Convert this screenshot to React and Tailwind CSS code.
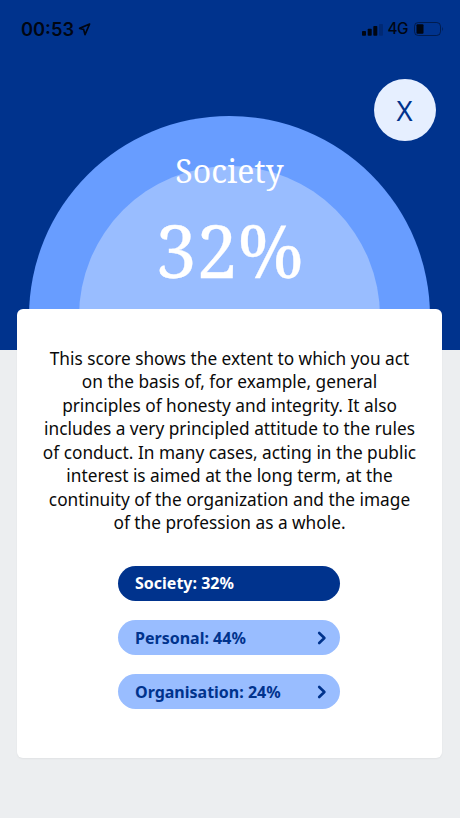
const description = [
  'This score shows the extent to which you act',
  'on the basis of, for example, general',
  'principles of honesty and integrity. It also',
  'includes a very principled attitude to the rules',
  'of conduct. In many cases, acting in the public',
  'interest is aimed at the long term, at the',
  'continuity of the organization and the image',
  'of the profession as a whole.',
];

const scores = [
  { label: 'Society', value: 32, active: true },
  { label: 'Personal', value: 44 },
  { label: 'Organisation', value: 24 },
];

function StatusBar() {
  return (
    <div className="flex h-[58px] items-center pl-[21px] pr-[16px] font-['Inter','Liberation_Sans',sans-serif] text-[#000612]">
      <span className="text-[18.3px] leading-none font-semibold">00:53</span>
      <svg className="ml-[4px] h-[13px] w-[13px]" viewBox="0 0 13 13" fill="none" stroke="currentColor" strokeWidth="1.7" strokeLinejoin="round">
        <path d="M11.6 1 L1.6 5.4 L5.6 6.4 L7 11.6 Z" />
      </svg>
      <svg className="mt-[2px] ml-auto h-3 w-[21px]" viewBox="0 0 21 12" fill="currentColor">
        <rect x="0" y="7" width="4" height="4.8" rx="0.8" />
        <rect x="5.7" y="4.8" width="4" height="7" rx="0.8" />
        <rect x="11.3" y="2" width="4" height="9.8" rx="0.8" />
        <rect x="17" y="0" width="4" height="11.8" rx="0.8" opacity="0.2" />
      </svg>
      <span className="ml-[5px] text-[15.3px] leading-none tracking-[-0.5px] font-medium">4G</span>
      <svg className="ml-[6px] h-[14px] w-[30px]" viewBox="0 0 30 14" fill="none">
        <rect x="0.5" y="0.5" width="26" height="13" rx="3.8" stroke="currentColor" opacity="0.5" />
        <rect x="2.5" y="2.3" width="7" height="9.4" rx="1" fill="currentColor" />
        <path d="M28.2 4.7 Q30 7 28.2 9.3 Z" fill="currentColor" opacity="0.5" />
      </svg>
    </div>
  );
}

function ScoreArc() {
  return (
    <div className="ml-[29px] mt-[58px] h-[200px] w-[401px] overflow-hidden">
      <div className="grid h-[401px] w-[401px] rounded-full bg-[#689dff]">
        <div className="col-start-1 row-start-1 mx-auto mt-[50px] h-[301px] w-[301px] rounded-full bg-[#99bdff]" />
        <div className="col-start-1 row-start-1 pt-[32px] text-center font-['Noto_Serif','DejaVu_Serif_Condensed','DejaVu_Serif',serif] text-white">
          <h1 className="text-[32px] leading-[46px]">Society</h1>
          <p className="mt-[6px] text-[73.4px] leading-[100px] [-webkit-text-stroke:0.3px_white]">32%</p>
        </div>
      </div>
    </div>
  );
}

function ScoreButton({ label, value, active }) {
  return (
    <button
      className={`flex h-[34.5px] w-[222px] items-center justify-between rounded-full pl-[17px] pr-[13px] text-[16px] font-bold ${
        active ? 'bg-[#00338d] text-white' : 'bg-[#99bdff] pt-px text-[#00338d]'
      }`}
    >
      <span>{label}: {value}%</span>
      {!active && (
        <svg className="h-[14px] w-[10px]" viewBox="0 0 10 14" fill="none" stroke="currentColor" strokeWidth="2.6" strokeLinecap="round" strokeLinejoin="round">
          <path d="M2.2 2 L7.4 7 L2.2 12" />
        </svg>
      )}
    </button>
  );
}

export default function App() {
  return (
    <div className="relative h-[818px] w-[460px] overflow-hidden bg-[#eceef0] font-['Noto_Sans',sans-serif]">
      <header className="h-[350px] overflow-hidden bg-[#00338d]">
        <StatusBar />
        <ScoreArc />
      </header>
      <button className="absolute top-[79px] left-[374px] flex h-[62px] w-[62px] items-center justify-center rounded-full bg-[#e6efff] pt-[2px] pr-px text-[27.5px] leading-none text-[#00338d]">
        X
      </button>
      <main className="relative ml-[17px] -mt-[41.5px] h-[449.5px] w-[425px] rounded-[6px] bg-white pt-[38px] shadow-[0_1px_2px_rgba(0,0,0,0.05)]">
        <p className="text-center text-[17.25px] leading-[23.5px] whitespace-nowrap text-[#0a0a0a]">
          {description.map((line) => (
            <span key={line} className="block">{line}</span>
          ))}
        </p>
        <div className="ml-[101px] mt-[31.5px] flex flex-col gap-[19.5px]">
          {scores.map((score) => (
            <ScoreButton key={score.label} {...score} />
          ))}
        </div>
      </main>
    </div>
  );
}
